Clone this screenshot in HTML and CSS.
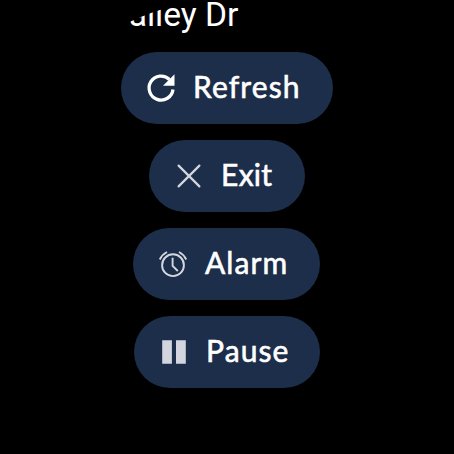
FILE: index.html
```
<!DOCTYPE html>
<html lang="en">
<head>
<meta charset="utf-8">
<title>Watch actions</title>
<link rel="stylesheet" href="styles.css">
</head>
<body>
<main class="watch">
  <p class="address">Valley Dr</p>
  <div class="actions">
    <button class="chip chip-refresh">
      <svg class="icon" viewBox="0 0 32 32"><path d="M28 17.500a12 12 0 1 1-3.500-10" fill="none" stroke="#fff" stroke-width="3.300"/><path d="M29.500 2.200v11.500H18z" fill="#fff"/></svg>
      <span class="label">Refresh</span>
    </button>
    <button class="chip chip-exit">
      <svg class="icon" viewBox="0 0 32 32"><path d="M5.600 5.600l20.800 20.800M26.400 5.600L5.600 26.400" fill="none" stroke="#d3d6de" stroke-width="2.200" stroke-linecap="round"/></svg>
      <span class="label">Exit</span>
    </button>
    <button class="chip chip-alarm">
      <svg class="icon" viewBox="0 0 32 32"><g fill="none" stroke="#d3d6de" stroke-width="1.900"><circle cx="16" cy="17.200" r="10.900"/><path d="M15.600 9.800v8l5.200 5.200M2.800 11.500Q5.200 6.400 10 4M29.200 11.500Q26.800 6.400 22 4"/></g></svg>
      <span class="label">Alarm</span>
    </button>
    <button class="chip chip-pause">
      <svg class="icon" viewBox="0 0 32 32"><path d="M4.200 4.200h9.700v23.600H4.200zM18 4.200h9.800v23.600H18z" fill="#d3d6de"/></svg>
      <span class="label">Pause</span>
    </button>
  </div>
</main>
</body>
</html>
```
FILE: styles.css
```
body {
  margin: 0;
  background: #000;
}

.watch {
  width: 454px;
  height: 454px;
  overflow: hidden;
  background: #000;
  clip-path: circle(227px);
}

.address {
  margin: 0 0 0 108px;
  height: 52px;
  color: #fff;
  font: 400 33.600px/29px Roboto, sans-serif;
  white-space: nowrap;
}

.actions {
  display: flex;
  flex-direction: column;
  align-items: center;
  gap: 16px;
}

.chip {
  display: flex;
  align-items: center;
  gap: 16px;
  box-sizing: border-box;
  height: 72px;
  padding: 0 0 0 24px;
  border: 0;
  border-radius: 36px;
  background: #1d2e4b;
  color: #fff;
  font: 400 30px/36px Lato, sans-serif;
  letter-spacing: 1.1px;
  -webkit-text-stroke: 0.6px #fff;
  white-space: nowrap;
}

.chip-refresh { width: 212px; }
.chip-exit { width: 156px; letter-spacing: 0.3px; }
.chip-alarm { width: 187px; margin-right: 1px; }
.chip-pause { width: 186px; }

.icon {
  flex: none;
  width: 32px;
  height: 32px;
}

.label {
  padding-bottom: 4px;
}
```
